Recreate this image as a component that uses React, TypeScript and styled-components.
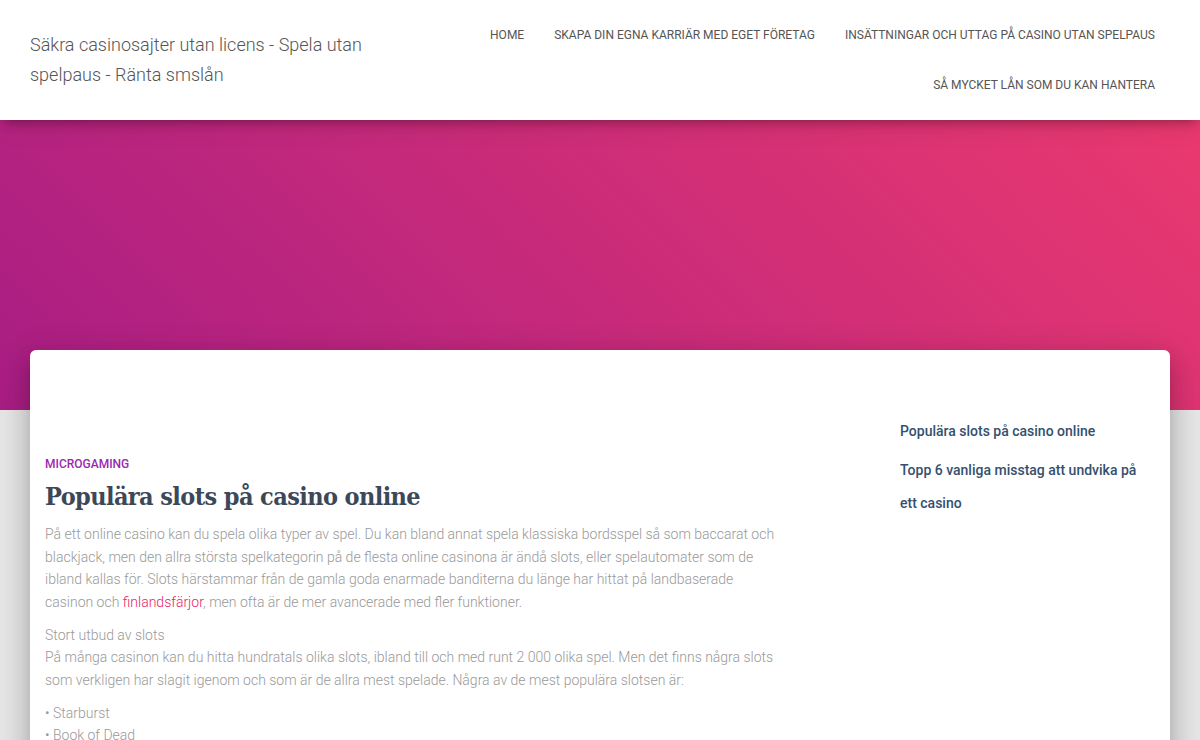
import React from "react";
import styled, { createGlobalStyle } from "styled-components";

const Global = createGlobalStyle`
  * { box-sizing: border-box; }
  html, body { margin: 0; padding: 0; }
  body {
    background: #e5e5e5;
    font-family: Roboto, "Liberation Sans", Arial, sans-serif;
    overflow: hidden;
  }
`;

const Page = styled.div`
  width: 1200px;
  min-height: 740px;
  background: #e5e5e5;
`;

const Header = styled.header`
  position: relative;
  z-index: 2;
  height: 120px;
  background: #fff;
  display: flex;
  justify-content: space-between;
  align-items: stretch;
  padding: 0 30px;
  box-shadow: 0 1px 10px -6px rgba(0, 0, 0, 0.42), 0 4px 25px 0 rgba(0, 0, 0, 0.12),
    0 8px 10px -5px rgba(0, 0, 0, 0.2);
`;

const Brand = styled.div`
  align-self: center;
  max-width: 360px;
  font-size: 18px;
  font-weight: 300;
  line-height: 30px;
  color: #555;
`;

const Nav = styled.nav`
  width: 700px;
  padding: 10px 0;
  display: flex;
  flex-wrap: wrap;
  justify-content: flex-end;
  align-content: flex-start;
`;

const NavItem = styled.a`
  display: block;
  padding: 15px 15px;
  font-size: 12px;
  line-height: 20px;
  text-transform: uppercase;
  color: #555;
  text-decoration: none;
  white-space: nowrap;
`;

const Hero = styled.div`
  height: 290px;
  background: linear-gradient(45deg, #a81d84 0%, #ea396f 100%);
`;

const Card = styled.main`
  position: relative;
  z-index: 1;
  margin: -60px 30px 0;
  min-height: 420px;
  background: #fff;
  border-radius: 6px;
  box-shadow: 0 16px 24px 2px rgba(0, 0, 0, 0.14), 0 6px 30px 5px rgba(0, 0, 0, 0.12),
    0 8px 10px -5px rgba(0, 0, 0, 0.2);
  display: grid;
  grid-template-columns: 750px 255px;
  column-gap: 105px;
  padding: 0 0 40px 15px;
`;

const Article = styled.article`
  padding-top: 105px;
`;

const Category = styled.div`
  font-size: 12px;
  line-height: 18px;
  font-weight: 500;
  text-transform: uppercase;
  color: #9c27b0;
  margin-bottom: 6px;
`;

const Title = styled.h2`
  margin: 0 0 8px;
  font-family: "Roboto Slab", "DejaVu Serif Condensed", "DejaVu Serif", serif;
  font-size: 25px;
  letter-spacing: -0.6px;
  line-height: 36px;
  font-weight: 700;
  color: #3c4858;
`;

const Para = styled.p`
  margin: 0 0 10px;
  width: 735px;
  font-size: 14px;
  line-height: 1.62;
  font-weight: 300;
  color: #999;
`;

const Link = styled.a`
  color: #e91e63;
  text-decoration: none;
`;

const Sidebar = styled.aside`
  padding-top: 65px;
`;

const WidgetList = styled.ul`
  list-style: none;
  margin: 0;
  padding: 0;
`;

const WidgetItem = styled.li`
  margin-bottom: 6px;
`;

const WidgetLink = styled.a`
  font-size: 14px;
  line-height: 33px;
  font-weight: 500;
  color: #34506f;
  text-decoration: none;
`;

export default function App() {
  return (
    <Page>
      <Global />
      <Header>
        <Brand>Säkra casinosajter utan licens - Spela utan spelpaus - Ränta smslån</Brand>
        <Nav>
          <NavItem href="#">Home</NavItem>
          <NavItem href="#">Skapa din egna karriär med eget företag</NavItem>
          <NavItem href="#">Insättningar och uttag på casino utan spelpaus</NavItem>
          <NavItem href="#">Så mycket lån som du kan hantera</NavItem>
        </Nav>
      </Header>
      <Hero />
      <Card>
        <Article>
          <Category>Microgaming</Category>
          <Title>Populära slots på casino online</Title>
          <Para>
            På ett online casino kan du spela olika typer av spel. Du kan bland annat spela klassiska
            bordsspel så som baccarat och blackjack, men den allra största spelkategorin på de flesta
            online casinona är ändå slots, eller spelautomater som de ibland kallas för. Slots
            härstammar från de gamla goda enarmade banditerna du länge har hittat på landbaserade
            casinon och <Link href="#">finlandsfärjor</Link>, men ofta är de mer avancerade med fler
            funktioner.
          </Para>
          <Para>
            Stort utbud av slots
            <br />
            På många casinon kan du hitta hundratals olika slots, ibland till och med runt 2 000 olika
            spel. Men det finns några slots som verkligen har slagit igenom och som är de allra mest
            spelade. Några av de mest populära slotsen är:
          </Para>
          <Para>
            • Starburst
            <br />• Book of Dead
          </Para>
        </Article>
        <Sidebar>
          <WidgetList>
            <WidgetItem>
              <WidgetLink href="#">Populära slots på casino online</WidgetLink>
            </WidgetItem>
            <WidgetItem>
              <WidgetLink href="#">Topp 6 vanliga misstag att undvika på ett casino</WidgetLink>
            </WidgetItem>
          </WidgetList>
        </Sidebar>
      </Card>
    </Page>
  );
}
